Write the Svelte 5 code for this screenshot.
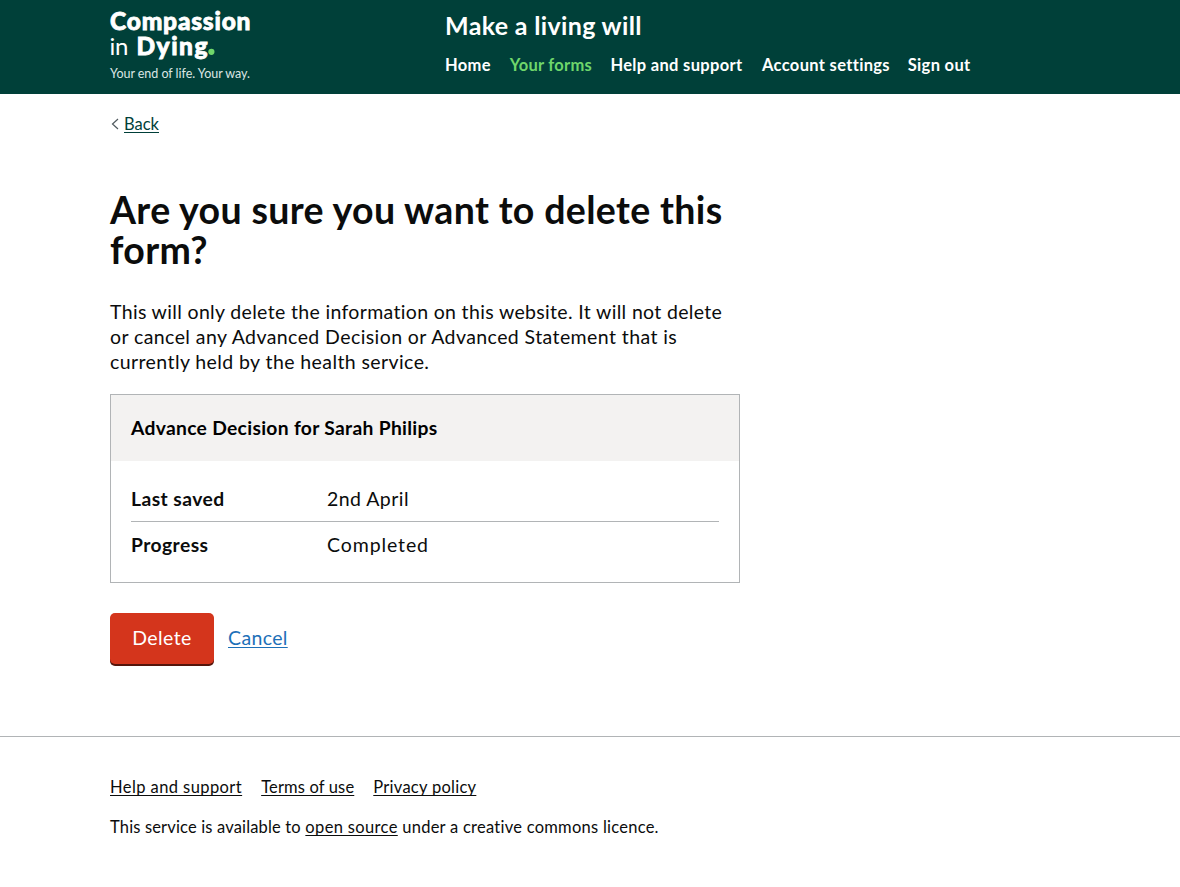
<script>
  const nav = [
    { label: 'Home', w: 46 },
    { label: 'Your forms', w: 82, active: true },
    { label: 'Help and support', w: 133 },
    { label: 'Account settings', w: 127 },
    { label: 'Sign out', w: 63 },
  ];
  const rows = [
    { key: 'Last saved', value: '2nd April' },
    { key: 'Progress', value: 'Completed' },
  ];
</script>

<header>
  <div class="container top">
    <a class="logo" href="#home" aria-label="Compassion in Dying">
      <svg width="142" height="84" viewBox="0 0 142 84">
        <g fill="#fff">
          <text class="heavy" x="0" y="29.500" textLength="140.500">Compassion</text>
          <text class="thin" x="-0.5" y="54.500" textLength="19">in</text>
          <text class="heavy" x="26.500" y="54.500" textLength="71">Dying</text>
          <text class="strap" x="0" y="77.500" textLength="140">Your end of life. Your way.</text>
        </g>
        <circle cx="101.400" cy="51.800" r="3.100" fill="#6fd66b" />
      </svg>
    </a>
    <div class="heading">
      <div class="service">Make a living will</div>
      <nav>
        {#each nav as item}
          <a href="#nav" class:active={item.active} style:width="{item.w}px">{item.label}</a>
        {/each}
      </nav>
    </div>
  </div>
</header>

<main class="container">
  <div class="back">
    <svg width="8" height="12" viewBox="0 0 8 12"><path d="M7 1 1.500 6 7 11" fill="none" stroke="#505a5f" stroke-width="1.200" /></svg>
    <a href="#back">Back</a>
  </div>
  <div class="column">
    <h1>Are you sure you want to delete this form?</h1>
    <p class="body">
      <span class="l1">This will only delete the information on this website. It will not delete</span>
      <span class="l2">or cancel any Advanced Decision or Advanced Statement that is</span>
      <span class="l3">currently held by the health service.</span>
    </p>
    <section class="card">
      <h2>Advance Decision for Sarah Philips</h2>
      <dl>
        {#each rows as row}
          <div class="row"><dt>{row.key}</dt><dd>{row.value}</dd></div>
        {/each}
      </dl>
    </section>
    <div class="actions">
      <button>Delete</button>
      <a href="#cancel">Cancel</a>
    </div>
  </div>
</main>

<footer>
  <div class="container">
    <div class="links">
      <a href="#help" class="help">Help and support</a>
      <a href="#terms" class="terms">Terms of use</a>
      <a href="#privacy" class="privacy">Privacy policy</a>
    </div>
    <p><span>This service is available to</span> <a href="#source">open source</a> under a creative commons licence.</p>
  </div>
</footer>

<style>
  :global(body) {
    margin: 0;
    background: #fff;
    color: #0b0c0c;
    font-family: Lato, sans-serif;
    font-variant-ligatures: none;
    -webkit-font-smoothing: antialiased;
  }
  .container { width: 960px; margin: 0 auto; }
  a { text-decoration-thickness: 1px; text-underline-offset: 2px; text-decoration-skip-ink: none; }
  header { height: 94px; background: #004039; }
  .top { display: flex; }
  .logo { width: 335px; height: 94px; }
  .logo svg { display: block; overflow: visible; }
  .heavy { font-size: 24.500px; font-weight: 900; stroke: #fff; stroke-width: 0.800px; }
  .thin { font-size: 24px; font-weight: 400; }
  .strap { font-size: 12.500px; fill: #dbe6e4; }
  .heading { color: #fff; }
  .service { margin-top: 9px; height: 32px; line-height: 32px; font-size: 25px; font-weight: 700; letter-spacing: 0.340px; white-space: nowrap; }
  nav { display: flex; gap: 18.700px; margin-top: 14px; font-size: 16.500px; font-weight: 700; line-height: 20px; letter-spacing: 0.320px; }
  nav a { color: #fff; text-decoration: none; white-space: nowrap; }
  nav .active { color: #6fd66b; letter-spacing: 0.250px; }
  .back { display: flex; align-items: center; gap: 5px; padding: 20px 0 0 1px; height: 20px; font-size: 16.500px; line-height: 20px; }
  .back a { color: #003f39; }
  .column { width: 630px; }
  h1 { margin: 56px 0 0; font-size: 37.500px; line-height: 40px; font-weight: 700; letter-spacing: 0.350px; }
  .body { margin: 29px 0 0; font-size: 19.500px; line-height: 25px; }
  .body span { display: block; white-space: nowrap; }
  .l1 { letter-spacing: 0.335px; }
  .l2 { letter-spacing: 0.415px; }
  .l3 { letter-spacing: 0.410px; }
  .card { box-sizing: border-box; height: 189px; margin-top: 20px; border: 1px solid #b1b4b6; }
  h2 { margin: 0; padding: 0 20px; height: 66px; line-height: 66px; background: #f3f2f1; font-size: 19.250px; font-weight: 700; letter-spacing: 0.310px; color: #000; }
  dl { margin: 0; padding: 15px 20px; }
  .row { display: flex; height: 45px; line-height: 46px; font-size: 19.500px; }
  .row + .row { border-top: 1px solid #b1b4b6; }
  dt { width: 196px; font-weight: 700; font-size: 19.250px; letter-spacing: 0.450px; }
  dd { margin: 0; letter-spacing: 0.450px; }
  .row + .row dd { letter-spacing: 0.900px; }
  .actions { display: flex; gap: 14px; margin-top: 30px; height: 53px; font-size: 19.500px; line-height: 50px; letter-spacing: 0.350px; }
  button { width: 104px; height: 51px; padding: 0 0 2px; border: 0; border-radius: 5px; background: #d4351c; box-shadow: 0 2px 0 #55150b; color: #fff; font: inherit; letter-spacing: 0.400px; line-height: 49px; }
  .actions a { color: #1d70b8; }
  footer { margin-top: 70px; border-top: 1px solid #b1b4b6; padding-top: 40px; font-size: 16.500px; line-height: 20px; }
  footer a { color: #0b0c0c; }
  .links { display: flex; gap: 19px; }
  .help { letter-spacing: 0.420px; }
  .terms { letter-spacing: 0.150px; }
  .privacy { letter-spacing: 0.270px; }
  footer p { margin: 20px 0 0; letter-spacing: 0.255px; }
  footer p span { letter-spacing: 0.160px; }
  footer p a { letter-spacing: 0.350px; }
</style>
